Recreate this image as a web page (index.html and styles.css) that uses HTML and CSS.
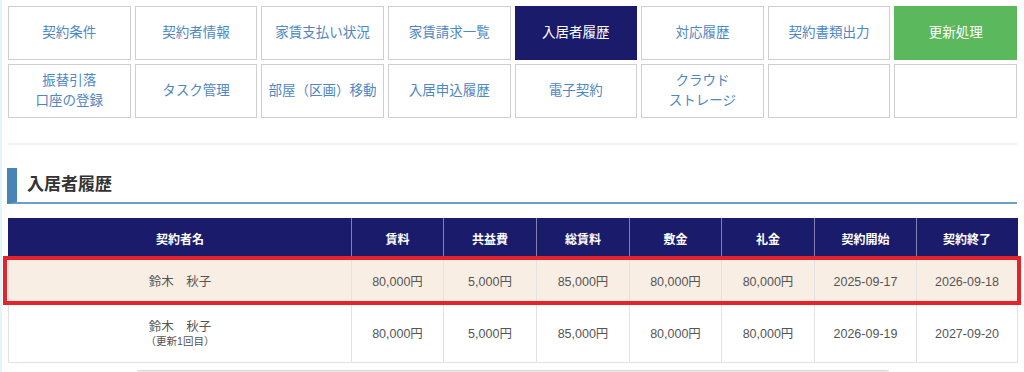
FILE: index.html
```html
<!DOCTYPE html>
<html lang="ja">
<head>
  <meta charset="UTF-8" />
  <meta name="viewport" content="width=device-width, initial-scale=1.0"/>
  <title>入居者履歴</title>
  <link rel="stylesheet" href="styles.css">
</head>
<body>
  <div class="page">
    <nav class="tabs">
      <a class="tab">契約条件</a>
      <a class="tab">契約者情報</a>
      <a class="tab">家賃支払い状況</a>
      <a class="tab">家賃請求一覧</a>
      <a class="tab active">入居者履歴</a>
      <a class="tab">対応履歴</a>
      <a class="tab">契約書類出力</a>
      <a class="tab renew">更新処理</a>
      <a class="tab">振替引落<br>口座の登録</a>
      <a class="tab">タスク管理</a>
      <a class="tab">部屋（区画）移動</a>
      <a class="tab">入居申込履歴</a>
      <a class="tab">電子契約</a>
      <a class="tab">クラウド<br>ストレージ</a>
      <a class="tab empty"></a>
      <a class="tab empty"></a>
    </nav>

    <hr class="divider">

    <h2 class="section-title">入居者履歴</h2>

    <div class="history">
      <table class="history-table">
        <colgroup>
          <col style="width:343px">
          <col style="width:92px">
          <col style="width:93px">
          <col style="width:93px">
          <col style="width:92px">
          <col style="width:93px">
          <col style="width:102px">
          <col style="width:101px">
        </colgroup>
        <thead>
          <tr>
            <th>契約者名</th>
            <th>賃料</th>
            <th>共益費</th>
            <th>総賃料</th>
            <th>敷金</th>
            <th>礼金</th>
            <th>契約開始</th>
            <th>契約終了</th>
          </tr>
        </thead>
        <tbody>
          <tr class="current">
            <td>鈴木　秋子</td>
            <td>80,000円</td>
            <td>5,000円</td>
            <td>85,000円</td>
            <td>80,000円</td>
            <td>80,000円</td>
            <td>2025-09-17</td>
            <td>2026-09-18</td>
          </tr>
          <tr class="renewed">
            <td>鈴木　秋子<span class="note">（更新1回目）</span></td>
            <td>80,000円</td>
            <td>5,000円</td>
            <td>85,000円</td>
            <td>80,000円</td>
            <td>80,000円</td>
            <td>2026-09-19</td>
            <td>2027-09-20</td>
          </tr>
        </tbody>
      </table>
      <div class="highlight"></div>
    </div>

    <div class="panel-edge"></div>
  </div>
</body>
</html>
```

FILE: styles.css
```css
body {
  margin: 0;
  font-family: "Liberation Sans", "Noto Sans CJK JP", sans-serif;
  background: #fff;
  border-left: 2px solid #e3f5fb;
  overflow: hidden;
}

.page {
  padding: 6px 6px 0 6px;
  width: 1009px;
}

/* tab menu */
.tabs {
  display: grid;
  grid-template-columns: repeat(8, 1fr);
  grid-auto-rows: 54px;
  gap: 4px;
  width: 1009px;
}

.tab {
  display: flex;
  align-items: center;
  justify-content: center;
  text-align: center;
  border: 1px solid #cfcfcf;
  color: #4f87c2;
  font-size: 13.5px;
  line-height: 20px;
  background: #fff;
  cursor: pointer;
}

.tab.active {
  background: #1b1b6c;
  border-color: #1b1b6c;
  color: #fff;
}

.tab.renew {
  background: #5cb85c;
  border-color: #5cb85c;
  color: #fff;
}

.divider {
  border: none;
  border-top: 2px solid #f2f2f2;
  margin: 25px 0 0 0;
  width: 1009px;
}

/* section heading */
.section-title {
  margin: 23px 0 0 -1px;
  height: 34px;
  line-height: 34px;
  padding-left: 10px;
  border-left: 10px solid #4a84b6;
  border-bottom: 2px solid #6d9fc4;
  font-size: 17px;
  font-weight: 700;
  color: #333;
}

/* history table */
.history {
  position: relative;
  margin-top: 14px;
}

.history-table {
  width: 1009px;
  border-collapse: collapse;
  table-layout: fixed;
  font-size: 12.5px;
}

.history-table th {
  height: 39px;
  padding: 0;
  background: #1b1b6c;
  color: #fff;
  font-size: 12px;
  font-weight: 700;
  border: 1px solid #8080b4;
  border-top-color: #1b1b6c;
}

.history-table th:first-child {
  border-left-color: #1b1b6c;
}

.history-table th:last-child {
  border-right-color: #1b1b6c;
}

.history-table td {
  padding: 0;
  text-align: center;
  color: #555;
  line-height: 16px;
  border: 1px solid #e2e2e2;
}

.history-table tr.current td {
  height: 45px;
  background: #f9eee4;
}

.history-table tr.renewed td {
  height: 57px;
}

.note {
  display: block;
  font-size: 10.5px;
  line-height: 13px;
}

.highlight {
  position: absolute;
  left: -5px;
  right: -4px;
  top: 38px;
  height: 41px;
  border: 4px solid #e4232b;
  pointer-events: none;
}

.panel-edge {
  margin: 7px 0 0 129px;
  width: 752px;
  height: 20px;
  border-top: 1px solid #d8d8d8;
  border-radius: 3px;
  background: linear-gradient(#e9e9e9, #f6f6f6);
}
```
